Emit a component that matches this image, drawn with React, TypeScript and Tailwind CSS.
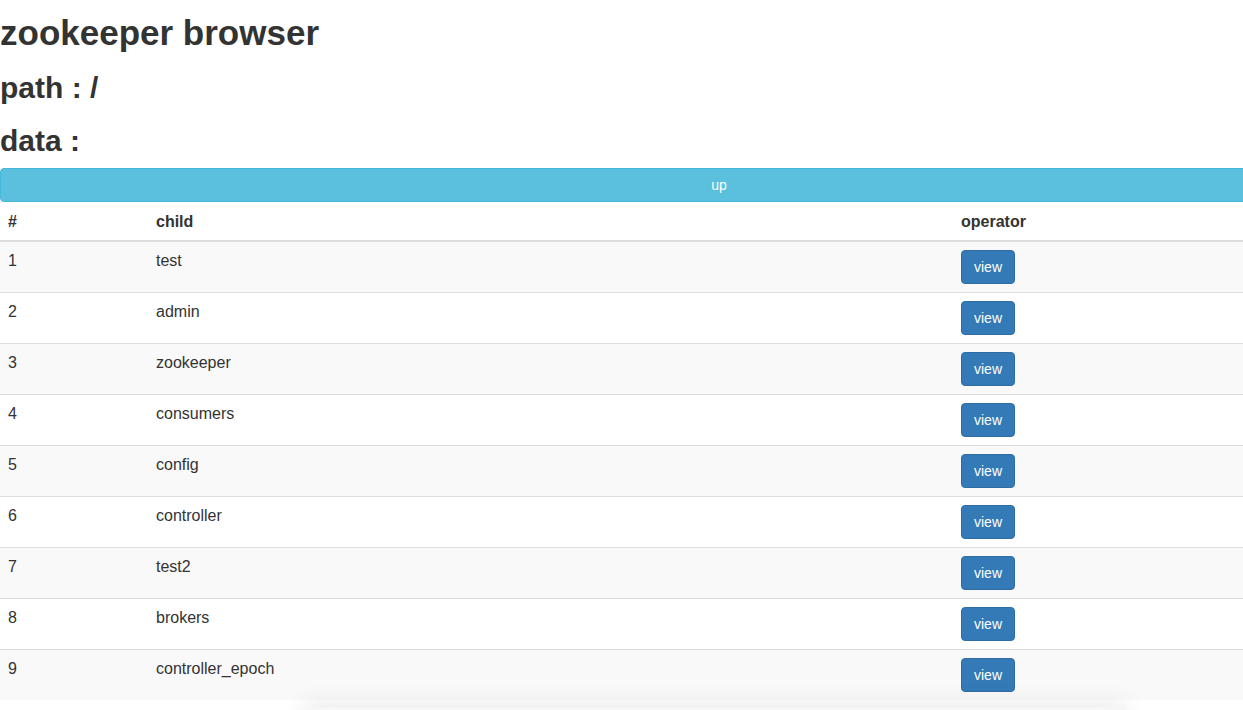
import React from "react";

const rows = [
  "test",
  "admin",
  "zookeeper",
  "consumers",
  "config",
  "controller",
  "test2",
  "brokers",
  "controller_epoch",
];

export default function App() {
  return (
    <div
      className="relative w-[1243px] h-[710px] overflow-hidden bg-white text-[#333] text-[14px] leading-[20px]"
      style={{ fontFamily: '"Liberation Sans", Arial, Helvetica, sans-serif' }}
    >
      <div className="w-[1438px]">
        <h1 className="m-0 mt-[13px] text-[35px] leading-[40px] font-bold">
          zookeeper browser
        </h1>
        <h2 className="m-0 mt-[18px] text-[30px] leading-[33px] font-bold">path : /</h2>
        <h2 className="m-0 mt-[20px] text-[30px] leading-[33px] font-bold">data :</h2>
        <button
          type="button"
          className="mt-[11px] block w-full h-[34px] rounded-[4px] border border-[#46b8da] bg-[#5bc0de] text-white text-[14px] leading-[20px]"
        >
          up
        </button>
        <table className="w-full table-fixed border-collapse text-[16px] leading-[20px]">
          <colgroup>
            <col className="w-[148px]" />
            <col className="w-[805px]" />
            <col />
          </colgroup>
          <thead>
            <tr>
              <th className="px-2 pt-[10px] pb-[8px] text-left font-bold align-bottom border-b-2 border-[#ddd]">#</th>
              <th className="px-2 pt-[10px] pb-[8px] text-left font-bold align-bottom border-b-2 border-[#ddd]">child</th>
              <th className="px-2 pt-[10px] pb-[8px] text-left font-bold align-bottom border-b-2 border-[#ddd]">operator</th>
            </tr>
          </thead>
          <tbody>
            {rows.map((name, i) => (
              <tr key={name} className={i % 2 === 0 ? "bg-[#f9f9f9]" : "bg-white"}>
                <td className="px-2 pt-[9px] pb-[7px] align-top border-t border-[#ddd]">{i + 1}</td>
                <td className="px-2 pt-[9px] pb-[7px] align-top border-t border-[#ddd]">{name}</td>
                <td className="p-2 align-top border-t border-[#ddd]">
                  <button
                    type="button"
                    className="block h-[34px] px-[12px] py-[6px] rounded-[4px] border border-[#2e6da4] bg-[#337ab7] text-white text-[14px] leading-[20px]"
                  >
                    view
                  </button>
                </td>
              </tr>
            ))}
          </tbody>
        </table>
      </div>
      <div className="absolute left-[305px] top-[707px] w-[820px] h-[30px] bg-[#f6f6f6] shadow-[0_-2px_24px_rgba(0,0,0,0.10)]" />
    </div>
  );
}
